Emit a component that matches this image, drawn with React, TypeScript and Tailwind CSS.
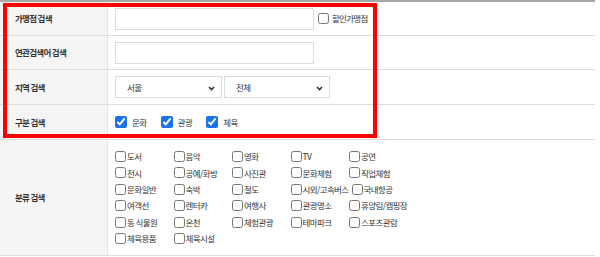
import React from 'react';

const categoryRows: string[][] = [
  ['도서', '음악', '영화', 'TV', '공연'],
  ['전시', '공예/화방', '사진관', '문화체험', '직업체험'],
  ['문화일반', '숙박', '철도', '시외/고속버스', '국내항공'],
  ['여객선', '렌터카', '여행사', '관광명소', '휴양림/캠핑장'],
  ['동 식물원', '온천', '체험관광', '테마파크', '스포츠관람'],
  ['체육용품', '체육시설'],
];

const font = { fontFamily: '"Noto Sans CJK KR", "Noto Sans", sans-serif' };

const Chevron = () => (
  <svg width="7" height="5" viewBox="0 0 7 5" className="absolute right-[6px] top-[9px]">
    <path d="M1 1 L3.5 3.5 L6 1" fill="none" stroke="#333" strokeWidth="1.6" />
  </svg>
);

const Select: React.FC<{ value: string; width: string }> = ({ value, width }) => (
  <div className={`relative h-[22px] border border-[#dcdcdc] bg-white ${width}`}>
    <span className="absolute left-[11px] top-[4px] text-[8.5px] leading-[12px] text-[#333] tracking-[-0.5px]">{value}</span>
    <Chevron />
  </div>
);

const Label: React.FC<{ children: React.ReactNode }> = ({ children }) => (
  <div className="flex items-center pl-[15px] bg-[#f5f5f5] border-r border-[#e4e4e4] text-[8.5px] font-bold text-[#333] tracking-[-0.7px]">
    {children}
  </div>
);

const Check: React.FC<{ label: string; checked?: boolean }> = ({ label, checked }) => (
  <label className="flex items-center gap-[5px] text-[8.5px] text-[#333] tracking-[-0.5px]">
    <input type="checkbox" defaultChecked={checked} className="w-[12px] h-[12px] accent-[#1a73e8]" />
    {label}
  </label>
);

export default function App() {
  return (
    <div className="relative w-[600px] h-[257px] bg-white" style={font}>
      <div className="w-[595px] border-t-2 border-[#a8a8a8]">
        <div className="grid grid-cols-[108px_1fr] h-[34px] border-b border-[#dcdcdc]">
          <Label>가맹점 검색</Label>
          <div className="flex items-center pl-[7px] gap-[4px]">
            <div className="w-[199px] h-[22px] border border-[#dcdcdc]" />
            <label className="flex items-center gap-[3px] text-[8.5px] text-[#333] tracking-[-0.7px]">
              <input type="checkbox" className="w-[11px] h-[11px]" />
              할인가맹점
            </label>
          </div>
        </div>
        <div className="grid grid-cols-[108px_1fr] h-[34px] border-b border-[#dcdcdc]">
          <Label>연관검색어 검색</Label>
          <div className="flex items-center pl-[7px]">
            <div className="w-[199px] h-[22px] border border-[#dcdcdc]" />
          </div>
        </div>
        <div className="grid grid-cols-[108px_1fr] h-[35px] border-b border-[#dcdcdc]">
          <Label>지역 검색</Label>
          <div className="flex items-center pl-[7px] gap-[2px]">
            <Select value="서울" width="w-[107px]" />
            <Select value="전체" width="w-[106px]" />
          </div>
        </div>
        <div className="grid grid-cols-[108px_1fr] h-[35px] border-b border-[#dcdcdc]">
          <Label>구분 검색</Label>
          <div className="flex items-center pl-[7px] gap-[14px]">
            <Check label="문화" checked />
            <Check label="관광" checked />
            <Check label="체육" checked />
          </div>
        </div>
        <div className="grid grid-cols-[108px_1fr] h-[116px] border-b border-[#dcdcdc]">
          <Label>분류 검색</Label>
          <div className="flex flex-col justify-center pl-[7px]">
            {categoryRows.map((row, i) => (
              <div key={i} className="flex h-[16.4px] items-center">
                {row.map((c) => (
                  <label
                    key={c}
                    className="flex items-center min-w-[58.5px] pr-[3px] text-[8.5px] text-[#333] tracking-[-0.6px]"
                  >
                    <input type="checkbox" className="w-[11px] h-[11px] mr-[1px]" />
                    {c}
                  </label>
                ))}
              </div>
            ))}
          </div>
        </div>
      </div>
      <div className="absolute left-[3px] top-[3px] w-[374px] h-[135px] border-4 border-[#ff0000]" />
    </div>
  );
}
